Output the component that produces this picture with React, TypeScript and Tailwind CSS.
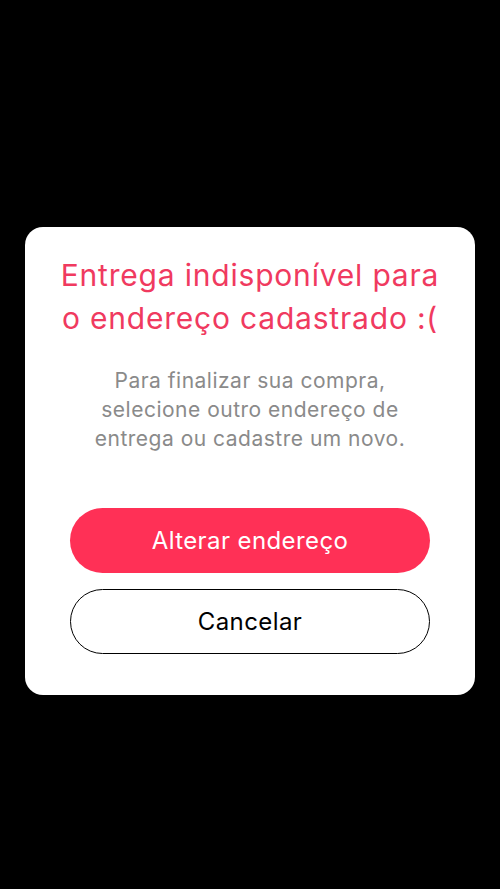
import React from 'react';

const App: React.FC = () => {
  return (
    <div className="w-[500px] h-[889px] bg-black flex items-center justify-center" style={{ fontFamily: 'Inter, Roboto, "Noto Sans", sans-serif' }}>
      <div className="w-[450px] mt-[33px] bg-white rounded-[18px] px-[20px] pt-[27px] pb-[41px] flex flex-col items-center">
        <h1 className="text-[30px] leading-[43px] tracking-[0.8px] text-[#f03a5f] text-center whitespace-nowrap">
          Entrega indisponível para
          <br />o endereço cadastrado :(
        </h1>
        <p className="mt-[26px] text-[21px] leading-[29px] tracking-[0.5px] text-[#8a8a8a] text-center whitespace-nowrap">
          Para finalizar sua compra,
          <br />
          selecione outro endereço de
          <br />
          entrega ou cadastre um novo.
        </p>
        <div className="mt-[55px] w-[360px] flex flex-col gap-4">
          <button className="w-full h-[65px] rounded-full bg-[#ff3056] text-white text-[24px] tracking-[0.4px]">
            Alterar endereço
          </button>
          <button className="w-full h-[65px] rounded-full border border-black bg-white text-black text-[24px] tracking-[0.4px]">
            Cancelar
          </button>
        </div>
      </div>
    </div>
  );
};

export default App;
